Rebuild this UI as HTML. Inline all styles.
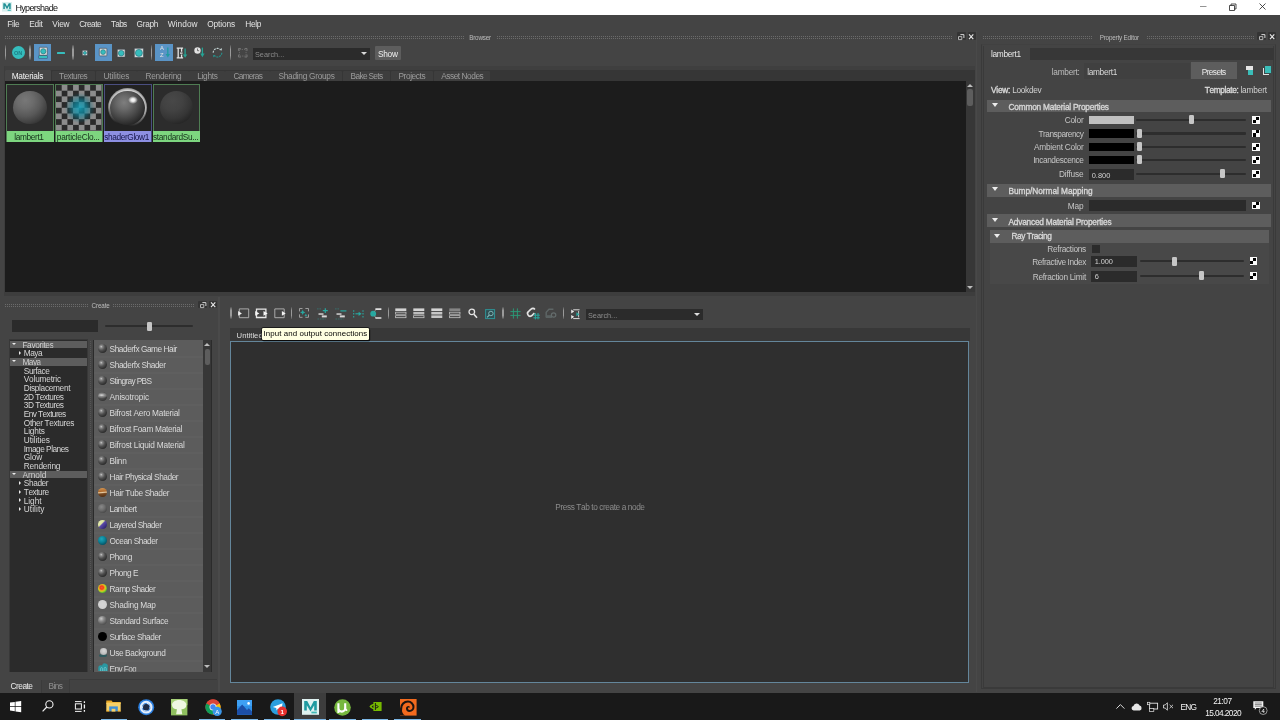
<!DOCTYPE html>
<html lang="en">
<head>
<meta charset="utf-8">
<title>Hypershade</title>
<style>
*{box-sizing:border-box;margin:0;padding:0}
html,body{width:1280px;height:720px;overflow:hidden;background:#444444;font-family:"Liberation Sans","DejaVu Sans",sans-serif;font-size:7.7px;color:#cccccc;font-kerning:none}
.a{position:absolute}
.t{position:absolute;white-space:nowrap;line-height:10px;height:10px}
.dots{position:absolute;height:3.4px}
.dots:before,.dots:after{content:"";position:absolute;left:0;width:100%;height:1.1px;background:repeating-linear-gradient(90deg,#6b6b6b 0 1px,transparent 1px 2px)}
.dots:before{top:0}
.dots:after{top:2.2px}
.sec{position:absolute;height:13px;background:#5d5d5d}
.sec b{position:absolute;top:2.5px;line-height:10px;color:#d2d2d2;font-weight:bold;white-space:nowrap;font-size:7.4px}
.tri{position:absolute;width:0;height:0;border-left:3.5px solid transparent;border-right:3.5px solid transparent;border-top:4px solid #ececec}
.trir{position:absolute;width:0;height:0;border-top:3px solid transparent;border-bottom:3px solid transparent;border-left:3.5px solid #ececec}
.lbl{position:absolute;text-align:right;white-space:nowrap;line-height:10px;height:10px;color:#c6c6c6}
.sl{position:absolute;height:2.4px;background:#2d2d2d;border-radius:1px}
.kn{position:absolute;width:5px;height:9px;background:#c6c6c6;border-radius:1.3px;margin-left:-0.4px}
.chk{position:absolute;width:7.8px;height:7.8px;background:#fafafa}
.chk:before,.chk:after{content:"";position:absolute;width:3.1px;height:3.1px;background:#000}
.chk:before{left:3.9px;top:0.8px}
.chk:after{left:0.8px;top:3.9px}
.sep{position:absolute;width:1.5px;background:linear-gradient(180deg,rgba(150,150,150,0.25) 0,#9a9a9a 30%,#9a9a9a 70%,rgba(150,150,150,0.25) 100%);border-radius:1px}
.tab{position:absolute;top:0;height:100%;border-right:1px solid #444;color:#9a9a9a;white-space:nowrap;line-height:12px}
svg{position:absolute;overflow:visible}
</style>
</head>
<body>
<div id="root" style="position:absolute;left:0;top:0;width:1280px;height:720px;will-change:transform">
<div class="a" style="left:0;top:0;width:1280px;height:15.4px;background:#fff"></div>
<svg style="left:1.600px;top:2.400px" width="10" height="9.600" viewBox="0 0 10 10" preserveAspectRatio="none"><rect width="10" height="10" fill="#d9f0ef"/><path d="M1.3 1.2h1.9l1.8 3.6 1.8-3.6h1.9v6.2H7.2V3.6L5 7.6 2.8 3.6v3.8H1.3z" fill="#1f8f95"/><rect x="5.6" y="8" width="3.2" height="1.2" fill="#3fb3b3"/></svg>
<div class="t" style="left:15.4px;top:3.4px;color:#111;font-size:9px;letter-spacing:-0.648px;">Hypershade</div>
<svg style="left:1199.3px;top:2px" width="80" height="10" viewBox="0 0 80 10"><path d="M1 4.5h6.5" stroke="#888" stroke-width="0.9" fill="none"/><path d="M30.5 3.5h5v5h-5zM32 3.5v-1.5h5v5h-1.5" stroke="#222" stroke-width="0.8" fill="none"/><path d="M60.5 1.5l6 6M66.5 1.5l-6 6" stroke="#222" stroke-width="0.8" fill="none"/></svg>
<div class="t" style="left:7.2px;top:18.9px;color:#e2e2e2;font-size:8.3px;letter-spacing:-0.281px;">File</div>
<div class="t" style="left:29.2px;top:18.9px;color:#e2e2e2;font-size:8.3px;letter-spacing:-0.201px;">Edit</div>
<div class="t" style="left:52.2px;top:18.9px;color:#e2e2e2;font-size:8.3px;letter-spacing:-0.185px;">View</div>
<div class="t" style="left:79.2px;top:18.9px;color:#e2e2e2;font-size:8.3px;letter-spacing:-0.485px;">Create</div>
<div class="t" style="left:110.95px;top:18.9px;color:#e2e2e2;font-size:8.3px;letter-spacing:-0.738px;">Tabs</div>
<div class="t" style="left:136.45px;top:18.9px;color:#e2e2e2;font-size:8.3px;letter-spacing:-0.264px;">Graph</div>
<div class="t" style="left:167.7px;top:18.9px;color:#e2e2e2;font-size:8.3px;letter-spacing:0.08px;">Window</div>
<div class="t" style="left:207.2px;top:18.9px;color:#e2e2e2;font-size:8.3px;letter-spacing:-0.086px;">Options</div>
<div class="t" style="left:245.2px;top:18.9px;color:#e2e2e2;font-size:8.3px;letter-spacing:-0.268px;">Help</div>
<div class="dots" style="left:5px;top:35.8px;width:460px"></div>
<div class="t" style="left:469.2px;top:33px;color:#bdbdbd;font-size:6.3px;letter-spacing:-0.194px;">Browser</div>
<div class="dots" style="left:497px;top:35.8px;width:455px"></div>
<div class="a" style="left:956.7px;top:32.4px;width:9px;height:7.8px;background:#343434;border-radius:1px"></div>
<div class="a" style="left:967.7px;top:32.4px;width:8px;height:7.8px;background:#343434;border-radius:1px"></div>
<svg style="left:958.4px;top:34px" width="16" height="6" viewBox="0 0 16 6"><path d="M0.5 2.6h3.300v3h-3.300z" fill="none" stroke="#c4c4c4" stroke-width="0.900"/><path d="M2.400 0.600h3.500v3.400" fill="none" stroke="#d6d6d6" stroke-width="1"/><path d="M11 0.400l4.300 4.800M15.300 0.400l-4.300 4.800" stroke="#e8e8e8" stroke-width="1.100" fill="none"/></svg>
<div class="sep" style="left:4.6px;top:45px;height:15px"></div>
<div class="a" style="left:11.700px;top:46.200px;width:13px;height:13px;border-radius:50%;background:#35bdbd"></div>
<div class="t" style="left:14px;top:47.800px;font-size:5.6px;font-weight:bold;color:#1b7f86;letter-spacing:-0.2px">ON</div>
<div class="sep" style="left:29.4px;top:45px;height:15px"></div>
<div class="a" style="left:34px;top:43.8px;width:17.3px;height:17.5px;background:#5a94c6"></div>
<svg style="left:38.8px;top:46.8px" width="8.6" height="8.6" viewBox="0 0 8.6 8.6"><rect x="0.3" y="0.3" width="8.0" height="8.0" rx="0.7" fill="#d9d9d9" stroke="#3b4650" stroke-width="0.6"/><circle cx="4.3" cy="4.3" r="2.6" fill="#36bdbd" stroke="#2a7880" stroke-width="0.7"/></svg>
<div class="a" style="left:38.8px;top:56px;width:8.6px;height:2.2px;background:#36bdbd;box-shadow:0 0 0 0.5px #2a5a70"></div>
<div class="a" style="left:56.5px;top:52px;width:8.6px;height:2.2px;background:#36bdbd;border-radius:0.6px"></div>
<div class="sep" style="left:72.3px;top:45px;height:15px"></div>
<svg style="left:82.4px;top:49.7px" width="5.8" height="5.8" viewBox="0 0 5.8 5.8"><rect x="0.3" y="0.3" width="5.2" height="5.2" rx="0.7" fill="#d9d9d9" stroke="#3b4650" stroke-width="0.6"/><circle cx="2.9" cy="2.9" r="1.5" fill="#36bdbd" stroke="#2a7880" stroke-width="0.7"/></svg>
<div class="a" style="left:94.5px;top:43.8px;width:17.3px;height:17.5px;background:#5a94c6"></div>
<svg style="left:99.3px;top:48.3px" width="8.2" height="8.2" viewBox="0 0 8.2 8.2"><rect x="0.3" y="0.3" width="7.6" height="7.6" rx="0.7" fill="#d9d9d9" stroke="#3b4650" stroke-width="0.6"/><circle cx="4.1" cy="4.1" r="2.4" fill="#36bdbd" stroke="#2a7880" stroke-width="0.7"/></svg>
<svg style="left:117.1px;top:48.5px" width="8.4" height="8.4" viewBox="0 0 8.4 8.4"><rect x="0.3" y="0.3" width="7.800000000000001" height="7.800000000000001" rx="0.7" fill="#d9d9d9" stroke="#3b4650" stroke-width="0.6"/><circle cx="4.2" cy="4.2" r="2.8" fill="#36bdbd" stroke="#2a7880" stroke-width="0.7"/></svg>
<svg style="left:134.4px;top:47.9px" width="9.8" height="9.8" viewBox="0 0 9.8 9.8"><rect x="0.3" y="0.3" width="9.200000000000001" height="9.200000000000001" rx="0.7" fill="#d9d9d9" stroke="#3b4650" stroke-width="0.6"/><circle cx="4.9" cy="4.9" r="3.5" fill="#36bdbd" stroke="#2a7880" stroke-width="0.7"/></svg>
<div class="sep" style="left:150.8px;top:45px;height:15px"></div>
<div class="a" style="left:155px;top:43.8px;width:18px;height:17.5px;background:#5a94c6"></div>
<div class="t" style="left:160.100px;top:45.400px;font-size:5.800px;line-height:6.400px;color:#e4e4e4;height:14px;white-space:normal;width:5px">A Z</div>
<svg style="left:164.600px;top:47px" width="6" height="11" viewBox="0 0 6 11"><path d="M2.800 0.400v8" stroke="#1f9aa0" stroke-width="1.300" fill="none"/><path d="M0.600 7L2.800 10.600l2.200-3.600z" fill="#1f9aa0"/></svg>
<svg style="left:176.400px;top:46.600px" width="12" height="12" viewBox="0 0 12 12"><path d="M0.700 1.100h6.400M0.700 10.900h6.400M2.200 1.200v9.600M5.600 1.200v3.600M5.600 7.400v3.400M4 6.100h2.600" stroke="#e4e4e4" stroke-width="1.300" fill="none"/><path d="M9.100 1.400v7" stroke="#25a394" stroke-width="1.300" fill="none"/><path d="M6.900 7.400L9.100 10.800l2.200-3.400z" fill="#25a394"/></svg>
<svg style="left:194.300px;top:47.400px" width="12" height="11" viewBox="0 0 12 11"><circle cx="3.500" cy="3.500" r="3.200" fill="#e2e2e2"/><path d="M3.500 1.500v2.200h1.600" stroke="#555" stroke-width="0.800" fill="none"/><path d="M8.400 0.600v7" stroke="#25a394" stroke-width="1.300" fill="none"/><path d="M6.200 6.600L8.400 10.200l2.200-3.600z" fill="#25a394"/></svg>
<svg style="left:212.400px;top:47.400px" width="11" height="11.400" viewBox="0 0 11 11"><path d="M1.200 5.500a4.300 4.300 0 0 1 7.400-3" stroke="#c2d2d2" stroke-width="1.100" fill="none" stroke-dasharray="2 0.900"/><path d="M9.800 5.500a4.300 4.300 0 0 1 -7.400 3" stroke="#26918c" stroke-width="1.100" fill="none" stroke-dasharray="2 0.900"/><path d="M7.300 2.900l2.500 0.400 0-2.600z" fill="#c2d2d2"/><path d="M3.700 8.100l-2.500-0.400 0 2.600z" fill="#26918c"/></svg>
<div class="sep" style="left:229.6px;top:45px;height:15px"></div>
<svg style="left:237.5px;top:48px" width="9.5" height="9.5" viewBox="0 0 10 10"><path d="M1.5 1.5h7v7h-7z" fill="none" stroke="#6c6c6c" stroke-width="1" stroke-dasharray="1.4 1"/><path d="M0.5 3v-2.5h2.5M7 0.5h2.5v2.5M9.5 7v2.5h-2.5M3 9.5h-2.5v-2.5" stroke="#777" stroke-width="1" fill="none"/></svg>
<div class="a" style="left:253px;top:48.2px;width:116.5px;height:11.6px;background:#2b2b2b"></div>
<div class="t" style="left:255px;top:50.2px;color:#8a8a8a;font-size:7.3px">Search...</div>
<div class="tri" style="left:360.800px;top:52.3px;border-top-color:#d8d8d8;border-left-width:3.2px;border-right-width:3.2px;border-top-width:3.6px"></div>
<div class="a" style="left:374.800px;top:46.400px;width:26px;height:13.600px;background:#5d5d5d;border-radius:1px"></div>
<div class="t" style="left:377.9px;top:49px;color:#f0f0f0;font-size:8.3px;letter-spacing:-0.241px;">Show</div>
<div class="a" style="left:5px;top:69.5px;width:970px;height:12px;background:#363636"></div>
<div class="a" style="left:5px;top:69.7px;width:46px;height:11.8px;background:#464646;border-radius:1px 1px 0 0"></div>
<div class="t" style="left:11.7px;top:71px;color:#f2f2f2;font-size:8.3px;letter-spacing:-0.241px;">Materials</div>
<div class="a" style="left:51.6px;top:71px;width:43.7px;height:10.2px;background:#3e3e3e;border-radius:1px 1px 0 0"></div>
<div class="t" style="left:58.95px;top:71px;color:#9c9c9c;font-size:8.3px;letter-spacing:-0.505px;">Textures</div>
<div class="a" style="left:95.9px;top:71px;width:40.9px;height:10.2px;background:#3e3e3e;border-radius:1px 1px 0 0"></div>
<div class="t" style="left:103.45px;top:71px;color:#9c9c9c;font-size:8.3px;letter-spacing:-0.083px;">Utilities</div>
<div class="a" style="left:137.4px;top:71px;width:51.4px;height:10.2px;background:#3e3e3e;border-radius:1px 1px 0 0"></div>
<div class="t" style="left:145.45px;top:71px;color:#9c9c9c;font-size:8.3px;letter-spacing:-0.255px;">Rendering</div>
<div class="a" style="left:189.4px;top:71px;width:35.4px;height:10.2px;background:#3e3e3e;border-radius:1px 1px 0 0"></div>
<div class="t" style="left:197.2px;top:71px;color:#9c9c9c;font-size:8.3px;letter-spacing:-0.275px;">Lights</div>
<div class="a" style="left:225.4px;top:71px;width:44.4px;height:10.2px;background:#3e3e3e;border-radius:1px 1px 0 0"></div>
<div class="t" style="left:233.45px;top:71px;color:#9c9c9c;font-size:8.3px;letter-spacing:-0.703px;">Cameras</div>
<div class="a" style="left:270.4px;top:71px;width:71.8px;height:10.2px;background:#3e3e3e;border-radius:1px 1px 0 0"></div>
<div class="t" style="left:278.45px;top:71px;color:#9c9c9c;font-size:8.3px;letter-spacing:-0.274px;">Shading Groups</div>
<div class="a" style="left:342.8px;top:71px;width:47.6px;height:10.2px;background:#3e3e3e;border-radius:1px 1px 0 0"></div>
<div class="t" style="left:350.6px;top:71px;color:#9c9c9c;font-size:8.3px;letter-spacing:-0.665px;">Bake Sets</div>
<div class="a" style="left:391px;top:71px;width:42.1px;height:10.2px;background:#3e3e3e;border-radius:1px 1px 0 0"></div>
<div class="t" style="left:398.45px;top:71px;color:#9c9c9c;font-size:8.3px;letter-spacing:-0.404px;">Projects</div>
<div class="a" style="left:433.7px;top:71px;width:56.3px;height:10.2px;background:#3e3e3e;border-radius:1px 1px 0 0"></div>
<div class="t" style="left:441.2px;top:71px;color:#9c9c9c;font-size:8.3px;letter-spacing:-0.451px;">Asset Nodes</div>
<div class="a" style="left:4.2px;top:66px;width:971px;height:3.6px;background:#3f3f3f"></div>
<div class="a" style="left:4.2px;top:66px;width:1.1px;height:228px;background:#3d3d3d"></div>
<div class="a" style="left:5.3px;top:81.3px;width:961px;height:210.7px;background:#1c1c1c"></div>
<div class="a" style="left:966.3px;top:81.3px;width:8.4px;height:210.7px;background:#373737"></div>
<div class="a" style="left:966.900px;top:88.800px;width:6.300px;height:17px;background:#5d5d5d;border-radius:2px"></div>
<div class="tri" style="left:967.2px;top:84px;transform:rotate(180deg);border-left-width:3px;border-right-width:3px;border-top-width:3.5px;border-top-color:#bdbdbd"></div>
<div class="tri" style="left:967.2px;top:286px;border-left-width:3px;border-right-width:3px;border-top-width:3.5px;border-top-color:#bdbdbd"></div>
<div class="a" style="left:6.3px;top:84.1px;width:47.8px;height:58px;background:#4f7c53"></div>
<div class="a" style="left:7.4px;top:85.3px;width:45.599999999999994px;height:45.4px;background:#2c2c2c"></div>
<div class="a" style="left:13.100000000000001px;top:90.5px;width:33.6px;height:33.6px;border-radius:50%;background:radial-gradient(circle at 36% 28%,#787878 0,#6c6c6c 25%,#585858 50%,#3e3e3e 72%,#232323 90%,#161616 100%)"></div>
<div class="a" style="left:6.8px;top:130.7px;width:46.8px;height:11px;background:#7dd67f"></div>
<div class="t" style="left:14.2px;top:132px;color:#15301a;font-size:8.3px;letter-spacing:-0.362px;">lambert1</div>
<div class="a" style="left:55.2px;top:84.1px;width:47.8px;height:58px;background:#4f7c53"></div>
<div class="a" style="left:56.300000000000004px;top:85.3px;width:45.599999999999994px;height:45.4px;background:#2a2a2a;background-image:conic-gradient(#8c8c8c 25%,#2a2a2a 0 50%,#8c8c8c 0 75%,#2a2a2a 0);background-size:11.4px 11.4px;background-position:0 0"></div>
<div class="a" style="left:56.300000000000004px;top:85.3px;width:45.599999999999994px;height:45.4px;background:radial-gradient(circle at 52% 50%,rgba(20,165,190,0.85) 0,rgba(10,140,165,0.65) 20%,rgba(0,105,125,0.3) 34%,rgba(0,90,110,0) 46%)"></div>
<div class="a" style="left:55.7px;top:130.7px;width:46.8px;height:11px;background:#7dd67f"></div>
<div class="t" style="left:56.8px;top:132px;color:#15301a;font-size:8.3px;letter-spacing:-0.238px;">particleClo...</div>
<div class="a" style="left:103.9px;top:84.1px;width:47.8px;height:58px;background:#4a4e80"></div>
<div class="a" style="left:105.0px;top:85.3px;width:45.599999999999994px;height:45.4px;background:#222"></div>
<div class="a" style="left:105.0px;top:85.3px;width:45.599999999999994px;height:45.4px;overflow:hidden"><div class="a" style="left:3.4px;top:2.9px;width:39.0px;height:39.0px;border-radius:50%;background:rgba(255,255,255,0.95);filter:blur(2px);-webkit-mask-image:linear-gradient(12deg,transparent 12%,#000 50%);mask-image:linear-gradient(12deg,transparent 12%,#000 50%)"></div></div>
<div class="a" style="left:110.3px;top:90.8px;width:34.6px;height:34.6px;border-radius:50%;background:radial-gradient(circle at 40% 34%,#7e7e7e 0,#6a6a6a 22%,#4a4a4a 48%,#2a2a2a 72%,#101010 100%)"></div>
<div class="a" style="left:128.4px;top:96.3px;width:10px;height:8px;border-radius:50%;background:radial-gradient(ellipse at 50% 50%,#fff 0,rgba(255,255,255,0.85) 28%,rgba(255,255,255,0) 70%)"></div>
<div class="a" style="left:104.4px;top:130.7px;width:46.8px;height:11px;background:#8d8fe2"></div>
<div class="t" style="left:104.2px;top:132px;color:#15154a;font-size:8.3px;letter-spacing:-0.373px;">shaderGlow1</div>
<div class="a" style="left:152.7px;top:84.1px;width:47.8px;height:58px;background:#4f7c53"></div>
<div class="a" style="left:153.79999999999998px;top:85.3px;width:45.599999999999994px;height:45.4px;background:#2c2c2c"></div>
<div class="a" style="left:159.49999999999997px;top:90.5px;width:33.6px;height:33.6px;border-radius:50%;background:radial-gradient(circle at 38% 30%,#484848 0,#424242 32%,#363636 58%,#212121 84%,#141414 100%)"></div>
<div class="a" style="left:153.2px;top:130.7px;width:46.8px;height:11px;background:#7dd67f"></div>
<div class="t" style="left:153.0px;top:132px;color:#15301a;font-size:8.3px;letter-spacing:-0.321px;">standardSu...</div>
<div class="a" style="left:976.3px;top:31px;width:1.100px;height:661px;background:#494949"></div>
<div class="a" style="left:218.3px;top:297px;width:1.3px;height:395px;background:#4a4a4a"></div>
<div class="a" style="left:4.2px;top:292px;width:971px;height:3.8px;background:#3d3d3d"></div>
<div class="dots" style="left:983px;top:35.8px;width:109px"></div>
<div class="t" style="left:1099.7px;top:33px;color:#bdbdbd;font-size:6.3px;letter-spacing:-0.184px;">Property Editor</div>
<div class="dots" style="left:1147px;top:35.8px;width:108px"></div>
<div class="a" style="left:1257.1px;top:32.4px;width:9px;height:7.8px;background:#343434;border-radius:1px"></div>
<div class="a" style="left:1268.1px;top:32.4px;width:8px;height:7.8px;background:#343434;border-radius:1px"></div>
<svg style="left:1258.8px;top:34px" width="16" height="6" viewBox="0 0 16 6"><path d="M0.5 2.6h3.300v3h-3.300z" fill="none" stroke="#c4c4c4" stroke-width="0.900"/><path d="M2.400 0.600h3.500v3.400" fill="none" stroke="#d6d6d6" stroke-width="1"/><path d="M11 0.400l4.300 4.800M15.300 0.400l-4.300 4.800" stroke="#e8e8e8" stroke-width="1.100" fill="none"/></svg>
<div class="a" style="left:981px;top:44px;width:295.2px;height:645.3px;border:1.100px solid #3a3a3a;border-top-color:#414141"></div>
<div class="a" style="left:983.2px;top:45.5px;width:291.3px;height:642.5px;border:1.100px solid #3a3a3a;border-top:none"></div>
<div class="a" style="left:984.5px;top:47.5px;width:289.5px;height:12.6px;background:#373737"></div>
<div class="a" style="left:984.5px;top:47.5px;width:45px;height:12.6px;background:#444"></div>
<div class="t" style="left:990.95px;top:48.6px;color:#e8e8e8;font-size:8.3px;letter-spacing:-0.287px;">lambert1</div>
<div class="t" style="left:1051.7px;top:66.7px;color:#bdbdbd;font-size:8.3px;letter-spacing:-0.248px;">lambert:</div>
<div class="a" style="left:1084.3px;top:62.5px;width:106px;height:16.7px;background:#404040"></div>
<div class="t" style="left:1087.2px;top:66.7px;color:#d8d8d8;font-size:8.3px;letter-spacing:-0.318px;">lambert1</div>
<div class="a" style="left:1190.8px;top:62.3px;width:46.6px;height:17px;background:#5d5d5d"></div>
<div class="t" style="left:1201.7px;top:66.7px;color:#ececec;font-size:8.3px;letter-spacing:-0.591px;">Presets</div>
<div class="a" style="left:1247.9px;top:69.6px;width:5.2px;height:5.4px;background:#3bbdb8"></div>
<div class="a" style="left:1245.8px;top:66.4px;width:7.1px;height:3.4px;background:#e6e6e6"></div>
<div class="a" style="left:1262.8px;top:68.3px;width:5.8px;height:6.7px;background:#e2e2e2"></div>
<div class="a" style="left:1264px;top:66px;width:7.6px;height:7.6px;background:#3a4a4c"></div>
<div class="a" style="left:1264.7px;top:66.4px;width:6.5px;height:6.7px;background:#3bbdb8"></div>
<div class="t" style="left:991.05px;top:84.6px;color:#d8d8d8;font-size:8.3px;letter-spacing:-0.249px;-webkit-text-stroke:0.35px #d8d8d8;">View:</div>
<div class="t" style="left:1012.2px;top:84.6px;color:#d0d0d0;font-size:8.3px;letter-spacing:-0.304px;">Lookdev</div>
<div class="t" style="left:1204.8px;top:84.6px;color:#d8d8d8;font-size:8.3px;letter-spacing:-0.373px;-webkit-text-stroke:0.35px #d8d8d8;">Template:</div>
<div class="t" style="left:1240.45px;top:84.6px;color:#d0d0d0;font-size:8.3px;letter-spacing:-0.168px;">lambert</div>
<div class="a" style="left:987px;top:99.6px;width:284.3px;height:12.8px;background:#5d5d5d"></div>
<div class="tri" style="left:991.6px;top:103.19999999999999px"></div>
<div class="t" style="left:1008.55px;top:102.1px;color:#d6d6d6;font-size:8.3px;letter-spacing:-0.205px;-webkit-text-stroke:0.35px #d6d6d6;">Common Material Properties</div>
<div class="t" style="left:1064.7px;top:115.4px;color:#c6c6c6;font-size:8.3px;letter-spacing:-0.217px;">Color</div>
<div class="a" style="left:1088.7px;top:116.0px;width:45.5px;height:8.4px;background:#c0c0c0"></div>
<div class="sl" style="left:1136px;top:119.0px;width:109.5px"></div>
<div class="kn" style="left:1189.5px;top:115.4px"></div>
<div class="chk" style="left:1252.3px;top:116.3px"></div>
<div class="t" style="left:1038.45px;top:128.7px;color:#c6c6c6;font-size:8.3px;letter-spacing:-0.479px;">Transparency</div>
<div class="a" style="left:1088.7px;top:129.3px;width:45.5px;height:8.4px;background:#000"></div>
<div class="sl" style="left:1136px;top:132.3px;width:109.5px"></div>
<div class="kn" style="left:1137.3px;top:128.7px"></div>
<div class="chk" style="left:1252.3px;top:129.6px"></div>
<div class="t" style="left:1033.95px;top:142.1px;color:#c6c6c6;font-size:8.3px;letter-spacing:-0.238px;">Ambient Color</div>
<div class="a" style="left:1088.7px;top:142.7px;width:45.5px;height:8.4px;background:#000"></div>
<div class="sl" style="left:1136px;top:145.7px;width:109.5px"></div>
<div class="kn" style="left:1137.3px;top:142.1px"></div>
<div class="chk" style="left:1252.3px;top:143.0px"></div>
<div class="t" style="left:1033.2px;top:155.4px;color:#c6c6c6;font-size:8.3px;letter-spacing:-0.43px;">Incandescence</div>
<div class="a" style="left:1088.7px;top:156.0px;width:45.5px;height:8.4px;background:#000"></div>
<div class="sl" style="left:1136px;top:159.0px;width:109.5px"></div>
<div class="kn" style="left:1137.3px;top:155.4px"></div>
<div class="chk" style="left:1252.3px;top:156.3px"></div>
<div class="t" style="left:1058.95px;top:169.1px;color:#c6c6c6;font-size:8.3px;letter-spacing:-0.19px;">Diffuse</div>
<div class="a" style="left:1088.7px;top:169.3px;width:45.5px;height:10.8px;background:#2b2b2b"></div>
<div class="t" style="left:1091.7px;top:170.8px;color:#d0d0d0;font-size:7.4px;letter-spacing:0.046px;">0.800</div>
<div class="sl" style="left:1136px;top:172.70000000000002px;width:109.5px"></div>
<div class="kn" style="left:1220.5px;top:169.1px"></div>
<div class="chk" style="left:1252.3px;top:170.0px"></div>
<div class="a" style="left:987px;top:183.8px;width:284.3px;height:12.8px;background:#5d5d5d"></div>
<div class="tri" style="left:991.6px;top:187.4px"></div>
<div class="t" style="left:1008.55px;top:186.3px;color:#d6d6d6;font-size:8.3px;letter-spacing:-0.044px;-webkit-text-stroke:0.35px #d6d6d6;">Bump/Normal Mapping</div>
<div class="t" style="left:1067.7px;top:200.6px;color:#c6c6c6;font-size:8.3px;letter-spacing:-0.132px;">Map</div>
<div class="a" style="left:1088.7px;top:200px;width:157.2px;height:10.8px;background:#2b2b2b"></div>
<div class="chk" style="left:1252.3px;top:201.5px"></div>
<div class="a" style="left:987px;top:214.4px;width:284.3px;height:12.8px;background:#5d5d5d"></div>
<div class="tri" style="left:991.6px;top:218.0px"></div>
<div class="t" style="left:1008.55px;top:216.9px;color:#d6d6d6;font-size:8.3px;letter-spacing:-0.217px;-webkit-text-stroke:0.35px #d6d6d6;">Advanced Material Properties</div>
<div class="a" style="left:989.5px;top:242.5px;width:279.3px;height:41px;background:#484848"></div>
<div class="a" style="left:989.5px;top:230px;width:279.3px;height:12.6px;background:#5d5d5d"></div>
<div class="tri" style="left:994.1px;top:233.6px"></div>
<div class="t" style="left:1011.55px;top:231.2px;color:#d6d6d6;font-size:8.3px;letter-spacing:-0.449px;-webkit-text-stroke:0.35px #d6d6d6;">Ray Tracing</div>
<div class="t" style="left:1047.2px;top:244.4px;color:#c6c6c6;font-size:8.3px;letter-spacing:-0.293px;">Refractions</div>
<div class="a" style="left:1091.6px;top:245px;width:8.3px;height:8.2px;background:#2b2b2b"></div>
<div class="t" style="left:1032.2px;top:257.0px;color:#c6c6c6;font-size:8.3px;letter-spacing:-0.389px;">Refractive Index</div>
<div class="a" style="left:1091.3px;top:255.9px;width:45.5px;height:11px;background:#2b2b2b"></div>
<div class="t" style="left:1094.7px;top:257.4px;color:#d0d0d0;font-size:7.4px;letter-spacing:-0.104px;">1.000</div>
<div class="sl" style="left:1139.5px;top:260.0px;width:104.3px"></div>
<div class="kn" style="left:1172.8px;top:256.6px"></div>
<div class="chk" style="left:1249.5px;top:257.4px"></div>
<div class="t" style="left:1032.7px;top:271.6px;color:#c6c6c6;font-size:8.3px;letter-spacing:-0.276px;">Refraction Limit</div>
<div class="a" style="left:1091.3px;top:270.5px;width:45.5px;height:11px;background:#2b2b2b"></div>
<div class="t" style="left:1094.7px;top:272.0px;color:#d0d0d0;font-size:7.4px;letter-spacing:-0.366px;">6</div>
<div class="sl" style="left:1139.5px;top:274.6px;width:104.3px"></div>
<div class="kn" style="left:1199.2px;top:271.2px"></div>
<div class="chk" style="left:1249.5px;top:272.0px"></div>
<div class="dots" style="left:5px;top:304.2px;width:83px"></div>
<div class="t" style="left:91.6px;top:301.3px;color:#bdbdbd;font-size:6.3px;letter-spacing:-0.152px;">Create</div>
<div class="dots" style="left:113px;top:304.2px;width:82px"></div>
<div class="a" style="left:198.1px;top:300.6px;width:9px;height:7.8px;background:#343434;border-radius:1px"></div>
<div class="a" style="left:209.1px;top:300.6px;width:8px;height:7.8px;background:#343434;border-radius:1px"></div>
<svg style="left:199.8px;top:302.2px" width="16" height="6" viewBox="0 0 16 6"><path d="M0.5 2.6h3.300v3h-3.300z" fill="none" stroke="#c4c4c4" stroke-width="0.900"/><path d="M2.400 0.600h3.500v3.400" fill="none" stroke="#d6d6d6" stroke-width="1"/><path d="M11 0.400l4.300 4.800M15.300 0.400l-4.300 4.800" stroke="#e8e8e8" stroke-width="1.100" fill="none"/></svg>
<div class="a" style="left:12.2px;top:320.3px;width:86.2px;height:11.3px;background:#2b2b2b"></div>
<div class="sl" style="left:105px;top:325px;width:87.5px"></div>
<div class="kn" style="left:147.2px;top:322px;height:8.6px"></div>
<div class="a" style="left:8.7px;top:339px;width:79.6px;height:333.4px;background:#383838"></div>
<div class="a" style="left:9.7px;top:340px;width:77.7px;height:331.5px;background:#2b2b2b"></div>
<div class="a" style="left:10.3px;top:340.90px;width:76.6px;height:7.4px;background:#5d5d5d"></div>
<div class="tri" style="left:11.6px;top:343.00px;border-left-width:2.1px;border-right-width:2.1px;border-top-width:2.5px"></div>
<div class="t" style="left:22.4px;top:339.7px;color:#d0d0d0;font-size:8.3px;letter-spacing:-0.342px;clip-path:inset(0 0 1.6px 0);">Favorites</div>
<div class="trir" style="left:18.7px;top:351.17px;border-top-width:2px;border-bottom-width:2px;border-left-width:2.5px"></div>
<div class="t" style="left:23.8px;top:348.37px;color:#d6d6d6;font-size:8.3px;letter-spacing:-0.474px;">Maya</div>
<div class="a" style="left:10.3px;top:358.23px;width:76.6px;height:7.4px;background:#5d5d5d"></div>
<div class="tri" style="left:11.6px;top:360.33px;border-left-width:2.1px;border-right-width:2.1px;border-top-width:2.5px"></div>
<div class="t" style="left:22.4px;top:357.03px;color:#d0d0d0;font-size:8.3px;letter-spacing:-0.499px;clip-path:inset(0 0 1.6px 0);">Maya</div>
<div class="t" style="left:23.8px;top:365.7px;color:#d6d6d6;font-size:8.3px;letter-spacing:-0.422px;">Surface</div>
<div class="t" style="left:23.8px;top:374.36px;color:#d6d6d6;font-size:8.3px;letter-spacing:-0.206px;">Volumetric</div>
<div class="t" style="left:23.8px;top:383.03px;color:#d6d6d6;font-size:8.3px;letter-spacing:-0.324px;">Displacement</div>
<div class="t" style="left:23.8px;top:391.69px;color:#d6d6d6;font-size:8.3px;letter-spacing:-0.505px;">2D Textures</div>
<div class="t" style="left:23.8px;top:400.36px;color:#d6d6d6;font-size:8.3px;letter-spacing:-0.505px;">3D Textures</div>
<div class="t" style="left:23.8px;top:409.02px;color:#d6d6d6;font-size:8.3px;letter-spacing:-0.583px;">Env Textures</div>
<div class="t" style="left:23.8px;top:417.69px;color:#d6d6d6;font-size:8.3px;letter-spacing:-0.372px;">Other Textures</div>
<div class="t" style="left:23.8px;top:426.35px;color:#d6d6d6;font-size:8.3px;letter-spacing:-0.208px;">Lights</div>
<div class="t" style="left:23.8px;top:435.02px;color:#d6d6d6;font-size:8.3px;letter-spacing:-0.066px;">Utilities</div>
<div class="t" style="left:23.8px;top:443.68px;color:#d6d6d6;font-size:8.3px;letter-spacing:-0.509px;">Image Planes</div>
<div class="t" style="left:23.8px;top:452.35px;color:#d6d6d6;font-size:8.3px;letter-spacing:-0.128px;">Glow</div>
<div class="t" style="left:23.8px;top:461.01px;color:#d6d6d6;font-size:8.3px;letter-spacing:-0.211px;">Rendering</div>
<div class="a" style="left:10.3px;top:470.88px;width:76.6px;height:7.4px;background:#5d5d5d"></div>
<div class="tri" style="left:11.6px;top:472.98px;border-left-width:2.1px;border-right-width:2.1px;border-top-width:2.5px"></div>
<div class="t" style="left:22.4px;top:469.68px;color:#d0d0d0;font-size:8.3px;letter-spacing:0.01px;clip-path:inset(0 0 1.6px 0);">Arnold</div>
<div class="trir" style="left:18.7px;top:481.14px;border-top-width:2px;border-bottom-width:2px;border-left-width:2.5px"></div>
<div class="t" style="left:23.8px;top:478.34px;color:#d6d6d6;font-size:8.3px;letter-spacing:-0.394px;">Shader</div>
<div class="trir" style="left:18.7px;top:489.80px;border-top-width:2px;border-bottom-width:2px;border-left-width:2.5px"></div>
<div class="t" style="left:23.8px;top:487.0px;color:#d6d6d6;font-size:8.3px;letter-spacing:-0.463px;">Texture</div>
<div class="trir" style="left:18.7px;top:498.47px;border-top-width:2px;border-bottom-width:2px;border-left-width:2.5px"></div>
<div class="t" style="left:23.8px;top:495.67px;color:#d6d6d6;font-size:8.3px;letter-spacing:-0.07px;">Light</div>
<div class="trir" style="left:18.7px;top:507.13px;border-top-width:2px;border-bottom-width:2px;border-left-width:2.5px"></div>
<div class="t" style="left:23.8px;top:504.34px;color:#d6d6d6;font-size:8.3px;letter-spacing:0.052px;">Utility</div>
<div class="a" style="left:89.6px;top:341px;width:1.2px;height:330px;background:repeating-linear-gradient(180deg,#555 0 1px,transparent 1px 2px)"></div>
<div class="a" style="left:93.2px;top:339.7px;width:118.8px;height:332.4px;background:#2b2b2b"></div>
<div class="a" style="left:93.9px;top:340.3px;width:109.3px;height:331.3px;background:#5c5c5c;overflow:hidden"></div>
<div class="a" style="left:203.2px;top:340.3px;width:8.2px;height:331.3px;background:#373737"></div>
<div class="a" style="left:204.6px;top:349px;width:5.2px;height:16px;background:#5d5d5d;border-radius:2px"></div>
<div class="tri" style="left:203.9px;top:343px;transform:rotate(180deg);border-left-width:3px;border-right-width:3px;border-top-width:3.5px;border-top-color:#bdbdbd"></div>
<div class="tri" style="left:203.9px;top:664.5px;border-left-width:3px;border-right-width:3px;border-top-width:3.5px;border-top-color:#bdbdbd"></div>
<div class="a" style="left:98px;top:343.80px;width:9px;height:9px;border-radius:50%;background:radial-gradient(circle at 36% 30%,#d2d2d2 0,#8c8c8c 13%,#505050 42%,#2c2c2c 74%,#161616 100%)"></div>
<div class="t" style="left:109.6px;top:343.7px;color:#dadada;font-size:8.3px;letter-spacing:-0.461px;">Shaderfx Game Hair</div>
<div class="a" style="left:93.9px;top:356.40px;width:109.3px;height:1.2px;background:#5f5f5f"></div>
<div class="a" style="left:98px;top:359.80px;width:9px;height:9px;border-radius:50%;background:radial-gradient(circle at 36% 30%,#d2d2d2 0,#8c8c8c 13%,#505050 42%,#2c2c2c 74%,#161616 100%)"></div>
<div class="t" style="left:109.6px;top:359.7px;color:#dadada;font-size:8.3px;letter-spacing:-0.413px;">Shaderfx Shader</div>
<div class="a" style="left:93.9px;top:372.40px;width:109.3px;height:1.2px;background:#5f5f5f"></div>
<div class="a" style="left:98px;top:375.80px;width:9px;height:9px;border-radius:50%;background:radial-gradient(circle at 36% 30%,#d2d2d2 0,#8c8c8c 13%,#505050 42%,#2c2c2c 74%,#161616 100%)"></div>
<div class="t" style="left:109.6px;top:375.7px;color:#dadada;font-size:8.3px;letter-spacing:-0.626px;">Stingray PBS</div>
<div class="a" style="left:93.9px;top:388.40px;width:109.3px;height:1.2px;background:#5f5f5f"></div>
<div class="a" style="left:98px;top:391.80px;width:9px;height:9px;border-radius:50%;background:radial-gradient(ellipse 80% 35% at 40% 35%,#e0e0e0 0,#8a8a8a 45%,rgba(70,70,70,0) 100%),radial-gradient(circle at 40% 35%,#707070 0,#454545 55%,#1e1e1e 100%)"></div>
<div class="t" style="left:109.6px;top:391.7px;color:#dadada;font-size:8.3px;letter-spacing:-0.155px;">Anisotropic</div>
<div class="a" style="left:93.9px;top:404.40px;width:109.3px;height:1.2px;background:#5f5f5f"></div>
<div class="a" style="left:98px;top:407.80px;width:9px;height:9px;border-radius:50%;background:radial-gradient(circle at 36% 30%,#d2d2d2 0,#8c8c8c 13%,#505050 42%,#2c2c2c 74%,#161616 100%)"></div>
<div class="t" style="left:109.6px;top:407.7px;color:#dadada;font-size:8.3px;letter-spacing:-0.242px;">Bifrost Aero Material</div>
<div class="a" style="left:93.9px;top:420.40px;width:109.3px;height:1.2px;background:#5f5f5f"></div>
<div class="a" style="left:98px;top:423.80px;width:9px;height:9px;border-radius:50%;background:radial-gradient(circle at 36% 30%,#d2d2d2 0,#8c8c8c 13%,#505050 42%,#2c2c2c 74%,#161616 100%)"></div>
<div class="t" style="left:109.6px;top:423.7px;color:#dadada;font-size:8.3px;letter-spacing:-0.299px;">Bifrost Foam Material</div>
<div class="a" style="left:93.9px;top:436.40px;width:109.3px;height:1.2px;background:#5f5f5f"></div>
<div class="a" style="left:98px;top:439.80px;width:9px;height:9px;border-radius:50%;background:radial-gradient(circle at 36% 30%,#d2d2d2 0,#8c8c8c 13%,#505050 42%,#2c2c2c 74%,#161616 100%)"></div>
<div class="t" style="left:109.6px;top:439.7px;color:#dadada;font-size:8.3px;letter-spacing:-0.205px;">Bifrost Liquid Material</div>
<div class="a" style="left:93.9px;top:452.40px;width:109.3px;height:1.2px;background:#5f5f5f"></div>
<div class="a" style="left:98px;top:455.80px;width:9px;height:9px;border-radius:50%;background:radial-gradient(circle at 36% 30%,#d2d2d2 0,#8c8c8c 13%,#505050 42%,#2c2c2c 74%,#161616 100%)"></div>
<div class="t" style="left:109.6px;top:455.7px;color:#dadada;font-size:8.3px;letter-spacing:-0.321px;">Blinn</div>
<div class="a" style="left:93.9px;top:468.40px;width:109.3px;height:1.2px;background:#5f5f5f"></div>
<div class="a" style="left:98px;top:471.80px;width:9px;height:9px;border-radius:50%;background:radial-gradient(circle at 36% 30%,#d2d2d2 0,#8c8c8c 13%,#505050 42%,#2c2c2c 74%,#161616 100%)"></div>
<div class="t" style="left:109.6px;top:471.7px;color:#dadada;font-size:8.3px;letter-spacing:-0.445px;">Hair Physical Shader</div>
<div class="a" style="left:93.9px;top:484.40px;width:109.3px;height:1.2px;background:#5f5f5f"></div>
<div class="a" style="left:98px;top:487.80px;width:9px;height:9px;border-radius:50%;background:linear-gradient(175deg,#d89a55 0,#b06a2c 38%,#e4c9a0 50%,#7a4a22 62%,#4a2c14 100%)"></div>
<div class="t" style="left:109.6px;top:487.7px;color:#dadada;font-size:8.3px;letter-spacing:-0.37px;">Hair Tube Shader</div>
<div class="a" style="left:93.9px;top:500.40px;width:109.3px;height:1.2px;background:#5f5f5f"></div>
<div class="a" style="left:98px;top:503.80px;width:9px;height:9px;border-radius:50%;background:radial-gradient(circle at 38% 32%,#8a8a8a 0,#6e6e6e 40%,#454545 80%,#262626 100%)"></div>
<div class="t" style="left:109.6px;top:503.7px;color:#dadada;font-size:8.3px;letter-spacing:-0.478px;">Lambert</div>
<div class="a" style="left:93.9px;top:516.40px;width:109.3px;height:1.2px;background:#5f5f5f"></div>
<div class="a" style="left:98px;top:519.80px;width:9px;height:9px;border-radius:50%;background:linear-gradient(135deg,#e9efb8 0,#dfe6a0 38%,#5a4aa8 48%,#3a2f80 75%,#1d1848 100%)"></div>
<div class="t" style="left:109.6px;top:519.7px;color:#dadada;font-size:8.3px;letter-spacing:-0.515px;">Layered Shader</div>
<div class="a" style="left:93.9px;top:532.40px;width:109.3px;height:1.2px;background:#5f5f5f"></div>
<div class="a" style="left:98px;top:535.80px;width:9px;height:9px;border-radius:50%;background:radial-gradient(circle at 40% 32%,#1fa6ba 0,#0c8398 40%,#054e60 80%,#032e3a 100%)"></div>
<div class="t" style="left:109.6px;top:535.7px;color:#dadada;font-size:8.3px;letter-spacing:-0.452px;">Ocean Shader</div>
<div class="a" style="left:93.9px;top:548.40px;width:109.3px;height:1.2px;background:#5f5f5f"></div>
<div class="a" style="left:98px;top:551.80px;width:9px;height:9px;border-radius:50%;background:radial-gradient(circle at 36% 30%,#d2d2d2 0,#8c8c8c 13%,#505050 42%,#2c2c2c 74%,#161616 100%)"></div>
<div class="t" style="left:109.6px;top:551.7px;color:#dadada;font-size:8.3px;letter-spacing:-0.33px;">Phong</div>
<div class="a" style="left:93.9px;top:564.40px;width:109.3px;height:1.2px;background:#5f5f5f"></div>
<div class="a" style="left:98px;top:567.80px;width:9px;height:9px;border-radius:50%;background:radial-gradient(circle at 36% 30%,#d2d2d2 0,#8c8c8c 13%,#505050 42%,#2c2c2c 74%,#161616 100%)"></div>
<div class="t" style="left:109.6px;top:567.7px;color:#dadada;font-size:8.3px;letter-spacing:-0.463px;">Phong E</div>
<div class="a" style="left:93.9px;top:580.40px;width:109.3px;height:1.2px;background:#5f5f5f"></div>
<div class="a" style="left:98px;top:583.80px;width:9px;height:9px;border-radius:50%;background:radial-gradient(circle at 42% 40%,#ff5a2a 0,#f0401e 22%,#f0a020 38%,#c8d020 50%,#58b830 70%,#2a8a2a 100%)"></div>
<div class="t" style="left:109.6px;top:583.7px;color:#dadada;font-size:8.3px;letter-spacing:-0.51px;">Ramp Shader</div>
<div class="a" style="left:93.9px;top:596.40px;width:109.3px;height:1.2px;background:#5f5f5f"></div>
<div class="a" style="left:98px;top:599.80px;width:9px;height:9px;border-radius:50%;background:radial-gradient(circle at 50% 50%,#d6d6d6 0,#cfcfcf 80%,#b8b8b8 100%)"></div>
<div class="t" style="left:109.6px;top:599.7px;color:#dadada;font-size:8.3px;letter-spacing:-0.256px;">Shading Map</div>
<div class="a" style="left:93.9px;top:612.40px;width:109.3px;height:1.2px;background:#5f5f5f"></div>
<div class="a" style="left:98px;top:615.80px;width:9px;height:9px;border-radius:50%;background:radial-gradient(circle at 36% 30%,#c8c8c8 0,#8c8c8c 30%,#5a5a5a 65%,#3a3a3a 100%)"></div>
<div class="t" style="left:109.6px;top:615.7px;color:#dadada;font-size:8.3px;letter-spacing:-0.375px;">Standard Surface</div>
<div class="a" style="left:93.9px;top:628.40px;width:109.3px;height:1.2px;background:#5f5f5f"></div>
<div class="a" style="left:98px;top:631.80px;width:9px;height:9px;border-radius:50%;background:#000"></div>
<div class="t" style="left:109.6px;top:631.7px;color:#dadada;font-size:8.3px;letter-spacing:-0.452px;">Surface Shader</div>
<div class="a" style="left:93.9px;top:644.40px;width:109.3px;height:1.2px;background:#5f5f5f"></div>
<div class="a" style="left:99px;top:654.10px;width:7.500px;height:3.400px;border-radius:50%;background:#2f5a5e"></div>
<div class="a" style="left:99.800px;top:647.80px;width:7.300px;height:6.800px;border-radius:50%;background:radial-gradient(circle at 55% 40%,#d8d8d8 0,#c0c0c0 55%,#8a8a8a 100%)"></div>
<div class="t" style="left:109.6px;top:647.7px;color:#dadada;font-size:8.3px;letter-spacing:-0.383px;">Use Background</div>
<div class="a" style="left:93.9px;top:660.40px;width:109.3px;height:1.2px;background:#5f5f5f"></div>
<svg style="left:97.900px;top:664.30px" width="10" height="7" viewBox="0 0 10 7"><path d="M0.300 7V3.400A2.400 2.400 0 0 1 4 1.600 2.800 2.800 0 0 1 9.700 3.200V7z" fill="#2a98a2"/><path d="M2.600 7V4.600a1 1 0 0 1 2 0V7M6.200 7V4.400a1 1 0 0 1 2 0V7" fill="none" stroke="#7fd0d6" stroke-width="0.700"/></svg>
<div class="t" style="left:109.6px;top:663.7px;color:#dadada;font-size:8.3px;letter-spacing:-0.601px;clip-path:inset(0 0 2.1px 0);">Env Fog</div>
<div class="a" style="left:41.6px;top:680px;width:28.4px;height:12.7px;background:#414141"></div>
<div class="a" style="left:70px;top:680px;width:147.5px;height:12.7px;background:#424242"></div>
<div class="a" style="left:40.8px;top:679.6px;width:1px;height:13.1px;background:#3b3b3b"></div>
<div class="a" style="left:69.4px;top:679.6px;width:1px;height:13.1px;background:#3b3b3b"></div>
<div class="a" style="left:69.4px;top:679.4px;width:148px;height:1px;background:#3b3b3b"></div>
<div class="t" style="left:10.5px;top:681px;color:#ececec;font-size:8.3px;letter-spacing:-0.485px;">Create</div>
<div class="t" style="left:48.4px;top:681px;color:#909090;font-size:8.3px;letter-spacing:-0.512px;">Bins</div>
<div class="sep" style="left:230.2px;top:306.7px;height:12.8px"></div>
<svg style="left:238px;top:307.800px" width="12" height="10" viewBox="0 0 12 10"><path d="M1.300 0.900h9.400v8.800h-9.400z" fill="none" stroke="#bcbcbc" stroke-width="0.850"/><path d="M0.100 3L3.900 5.400 0.100 7.800z" fill="#f2f2f2"/></svg>
<svg style="left:255px;top:307.800px" width="13" height="10" viewBox="0 0 13 10"><path d="M1.500 1.100h9.400v8.400h-9.400z" fill="none" stroke="#e6e6e6" stroke-width="1.300"/><path d="M0.200 3L4.400 5.400 0.200 7.800z" fill="#f6f6f6"/><path d="M8.500 3L12.700 5.400 8.500 7.800z" fill="#f6f6f6"/></svg>
<svg style="left:273.600px;top:307.800px" width="12" height="10" viewBox="0 0 12 10"><path d="M0.800 0.900h9.400v8.800h-9.400z" fill="none" stroke="#bcbcbc" stroke-width="0.850"/><path d="M7.900 3L11.700 5.400 7.900 7.800z" fill="#f2f2f2"/></svg>
<div class="sep" style="left:290.8px;top:306.7px;height:12.8px"></div>
<svg style="left:299px;top:308.300px" width="10" height="9.800" viewBox="0 0 10 9.800"><path d="M0.500 3.400v-2.900h3M6.400 0.500h3.100v2.900M9.500 6.400v2.900h-3.100M3.500 9.300h-3v-2.900" fill="none" stroke="#a8a8a8" stroke-width="0.900"/><path d="M3.700 1.800L4.500 3.600 6.300 4.400 4.500 5.200 3.700 7 2.900 5.200 1.100 4.400 2.900 3.600z" fill="#27a8a0"/><path d="M6.900 5.600L7.400 6.700 8.500 7.200 7.400 7.700 6.900 8.800 6.400 7.700 5.300 7.200 6.400 6.700z" fill="#27a8a0"/></svg>
<svg style="left:315.500px;top:307.600px" width="12" height="12" viewBox="0 0 12 12"><path d="M1 0.900h4.500" stroke="#357f7c" stroke-width="0.700" stroke-dasharray="1.600 0.800"/><path d="M9.300 0.300v4.800M6.800 2.700h5" stroke="#27a8a0" stroke-width="1.200" fill="none"/><rect x="2.500" y="5.100" width="5" height="1.900" fill="#b4b4b4"/><rect x="5.800" y="7.400" width="5" height="2" fill="#d6d6d6"/><path d="M1.500 11h8" stroke="#357f7c" stroke-width="0.700" stroke-dasharray="1.600 0.800"/></svg>
<svg style="left:333.500px;top:307.600px" width="13" height="12" viewBox="0 0 13 12"><path d="M1 0.900h4.500" stroke="#357f7c" stroke-width="0.700" stroke-dasharray="1.600 0.800"/><path d="M6.400 2.900h6" stroke="#27a8a0" stroke-width="1.200" fill="none"/><rect x="2.500" y="5.100" width="5" height="1.900" fill="#b4b4b4"/><rect x="5.800" y="7.400" width="5" height="2" fill="#d6d6d6"/><path d="M1.500 11h8" stroke="#357f7c" stroke-width="0.700" stroke-dasharray="1.600 0.800"/></svg>
<svg style="left:352.600px;top:309.800px" width="11" height="8" viewBox="0 0 11 8"><path d="M0.700 0.300v7.400M10 0.300v7.400" stroke="#27a8a0" stroke-width="1.100" stroke-dasharray="1.500 1.300" fill="none"/><path d="M2.400 3.800h4" stroke="#27a8a0" stroke-width="1.100"/><path d="M5.600 1.700L8.600 3.800 5.600 5.900z" fill="#27a8a0"/></svg>
<svg style="left:369.600px;top:307.800px" width="12" height="12" viewBox="0 0 12 12"><circle cx="3.200" cy="5.700" r="2.900" fill="#27a8a0"/><path d="M4.600 3.600L5.800 1.400M4.600 7.800L5.800 10" stroke="#9a9a9a" stroke-width="0.800" fill="none"/><path d="M5.400 1.200h6M5.400 10h6" stroke="#e0e0e0" stroke-width="1.700" fill="none"/></svg>
<div class="sep" style="left:387.6px;top:306.7px;height:12.8px"></div>
<svg style="left:394.6px;top:308px" width="11.6" height="10.4" viewBox="0 0 11.6 10.4"><rect x="0.3" y="0.4" width="11" height="2.6" fill="#d4d4d4"/><rect x="0.6" y="4.2" width="10.4" height="2" fill="none" stroke="#c6c6c6" stroke-width="0.8"/><rect x="0.6" y="7.7" width="10.4" height="2" fill="none" stroke="#c6c6c6" stroke-width="0.8"/></svg>
<svg style="left:412.6px;top:308px" width="11.6" height="10.4" viewBox="0 0 11.6 10.4"><rect x="0.3" y="0.4" width="11" height="2.6" fill="#d4d4d4"/><rect x="0.3" y="3.9" width="11" height="2.6" fill="#bdbdbd"/><rect x="0.6" y="7.7" width="10.4" height="2" fill="none" stroke="#c6c6c6" stroke-width="0.8"/></svg>
<svg style="left:430.9px;top:308px" width="11.6" height="10.4" viewBox="0 0 11.6 10.4"><rect x="0.3" y="0.4" width="11" height="2.6" fill="#d4d4d4"/><rect x="0.3" y="3.9" width="11" height="2.6" fill="#c6c6c6"/><rect x="0.3" y="7.4" width="11" height="2.6" fill="#c6c6c6"/></svg>
<svg style="left:448.8px;top:308px" width="11.6" height="10.4" viewBox="0 0 11.6 10.4"><rect x="0.3" y="0.4" width="11" height="2.6" fill="#858585"/><rect x="0.6" y="4.2" width="10.4" height="2" fill="none" stroke="#c6c6c6" stroke-width="0.8"/><rect x="0.6" y="7.7" width="10.4" height="2" fill="none" stroke="#c6c6c6" stroke-width="0.8"/></svg>
<svg style="left:467.6px;top:308.2px" width="10" height="11" viewBox="0 0 10 11"><circle cx="3.8" cy="3.9" r="2.8" fill="none" stroke="#e6e6e6" stroke-width="1.3"/><path d="M5.9 6.2L9 9.8" stroke="#e6e6e6" stroke-width="1.6"/></svg>
<svg style="left:485.4px;top:308.5px" width="10.2" height="10.2" viewBox="0 0 10 10"><rect x="0.6" y="0.6" width="8.8" height="8.8" fill="#2f4f52" stroke="#2f9295" stroke-width="1"/><circle cx="5.8" cy="4.4" r="2.2" fill="none" stroke="#86babc" stroke-width="0.9"/><path d="M4.2 6L2 8.2" stroke="#86babc" stroke-width="1.1"/></svg>
<div class="sep" style="left:502.3px;top:306.7px;height:12.8px"></div>
<svg style="left:509.8px;top:308px" width="11" height="11" viewBox="0 0 11 11"><path d="M3.4 0.4v10.2M7.4 0.4v10.2M0.4 3.6h10.2M0.4 7.4h10.2" stroke="#2b9a78" stroke-width="0.95" fill="none"/></svg>
<svg style="left:527.6px;top:307.8px" width="12" height="12" viewBox="0 0 12 12"><path d="M6.4 5.2L3.6 7.8A2.6 2.6 0 0 1 0.9 3.2L3 1.2a2.6 2.6 0 0 1 3.9 0.2" fill="none" stroke="#e4e4e4" stroke-width="1.6"/><path d="M7.4 5v6.4M10 5v6.4M5.4 7.2h6.4M5.4 9.8h6.4" stroke="#27a8a0" stroke-width="1" fill="none"/></svg>
<svg style="left:545.2px;top:308.2px" width="12" height="11" viewBox="0 0 12 11"><path d="M1.2 9.6V4.2L4 1.2h4.4" fill="none" stroke="#5e6666" stroke-width="1.4"/><rect x="1" y="7.2" width="6" height="2.8" fill="#5a6262"/><circle cx="8.6" cy="7" r="2.2" fill="none" stroke="#646c6c" stroke-width="1.2"/></svg>
<div class="sep" style="left:562.8px;top:306.7px;height:12.8px"></div>
<svg style="left:570.6px;top:308.8px" width="10.4" height="10.4" viewBox="0 0 10.4 10.4"><path d="M2.2 0.8h6.4M2.2 9.6h6.4" stroke="#dcdcdc" stroke-width="1"/><path d="M0.2 0.4L3.2 2.6 0.2 4.4zM0.2 6L3.2 7.8 0.2 10z" fill="#e8e8e8"/><path d="M7.6 2v6.4" stroke="#cfcfcf" stroke-width="0.9"/><path d="M5.4 3.2L8.4 5.2 5.4 7.2z" fill="#27a8a0"/></svg>
<div class="a" style="left:586px;top:309px;width:117.2px;height:11.2px;background:#2b2b2b"></div>
<div class="t" style="left:588px;top:310.9px;color:#8d8d8d;font-size:7.3px">Search...</div>
<div class="tri" style="left:694px;top:313.2px;border-top-color:#e0e0e0;border-left-width:3.2px;border-right-width:3.2px;border-top-width:3.4px"></div>
<div class="a" style="left:230.2px;top:328.3px;width:739.600px;height:13.100px;background:#383838"></div>
<div class="t" style="left:236.6px;top:330.6px;color:#dcdcdc">Untitled_1</div>
<div class="a" style="left:230.2px;top:341.3px;width:738.8px;height:341.7px;background:#2f2f2f;border:1.2px solid #64869b"></div>
<div class="t" style="left:555.3px;top:502px;color:#8c8c8c;font-size:8.3px;letter-spacing:-0.416px;">Press Tab to create a node</div>
<div class="a" style="left:261.7px;top:327.8px;width:107.8px;height:11.9px;background:#ffffe1;border-radius:1.2px;box-shadow:0 0 0 0.7px rgba(10,10,10,0.9),0.8px 0.9px 0.5px 0.4px rgba(0,0,0,0.7)"></div>
<div class="t" style="left:263.5px;top:328.9px;color:#000;font-size:7.9px;letter-spacing:0.087px;">Input and output connections</div>
<div class="a" style="left:0;top:692.7px;width:1280px;height:27.3px;background:#191919"></div>
<div class="a" style="left:294.2px;top:692.7px;width:32.2px;height:27.3px;background:#3d3d3d"></div>
<div class="a" style="left:100.55px;top:718.6px;width:26.5px;height:1.4px;background:#7db9e8"></div>
<div class="a" style="left:198.55px;top:718.6px;width:26.5px;height:1.4px;background:#7db9e8"></div>
<div class="a" style="left:231.05px;top:718.6px;width:26.5px;height:1.4px;background:#7db9e8"></div>
<div class="a" style="left:263.75px;top:718.6px;width:26.5px;height:1.4px;background:#7db9e8"></div>
<div class="a" style="left:329.45px;top:718.6px;width:26.5px;height:1.4px;background:#7db9e8"></div>
<div class="a" style="left:361.55px;top:718.6px;width:26.5px;height:1.4px;background:#7db9e8"></div>
<div class="a" style="left:394.35px;top:718.6px;width:26.5px;height:1.4px;background:#7db9e8"></div>
<div class="a" style="left:294.2px;top:718.6px;width:32.2px;height:1.4px;background:#7db9e8"></div>
<svg style="left:10.3px;top:701.2px" width="11.2" height="11.2" viewBox="0 0 11.2 11.2"><path d="M0 1.6L4.8 0.9V5.3H0zM5.5 0.8L11.2 0V5.3H5.5zM0 5.9H4.8V10.3L0 9.6zM5.5 5.9H11.2V11.2L5.5 10.4z" fill="#fff"/></svg>
<svg style="left:42px;top:700.4px" width="12" height="12" viewBox="0 0 12 12"><circle cx="7.4" cy="4.4" r="3.6" fill="none" stroke="#f2f2f2" stroke-width="1.1"/><path d="M4.8 7L0.6 11.4" stroke="#f2f2f2" stroke-width="1.2"/></svg>
<svg style="left:73.8px;top:701px" width="12" height="11" viewBox="0 0 12 11"><path d="M1 0.6h6.6M1 10.4h6.6" stroke="#f2f2f2" stroke-width="1"/><rect x="1.4" y="2.8" width="6" height="5.2" fill="none" stroke="#f2f2f2" stroke-width="1"/><path d="M10.4 0.2v1.8M10.4 3.6v3.8M10.4 9v1.8" stroke="#f2f2f2" stroke-width="1.3"/></svg>
<svg style="left:106.4px;top:700px" width="15" height="13" viewBox="0 0 15 13"><path d="M0.3 0.6h5.2l1.2 1.4h8v2H0.3z" fill="#e9a825"/><rect x="0.3" y="2.6" width="14.4" height="8.6" fill="#f7d067"/><rect x="3.2" y="6.4" width="8.6" height="4.8" fill="#3f8fd6"/><rect x="5.6" y="8.8" width="3.8" height="2.8" fill="#f7d067"/><rect x="0.3" y="10.6" width="3" height="1" fill="#e9a825"/><rect x="11.8" y="10.6" width="3" height="1" fill="#e9a825"/></svg>
<svg style="left:138.2px;top:698.6px" width="16.4" height="16.4" viewBox="0 0 16 16"><circle cx="8" cy="8" r="7.8" fill="#2b7fe0"/><circle cx="8" cy="8" r="5.200" fill="none" stroke="#e4eefc" stroke-width="2"/><path d="M8 2.4L11 7M13.4 6.4L9 10.6M11.2 12.4L5.6 11M3 10L6.4 5.2" stroke="#d6e6fb" stroke-width="1.1" fill="none"/><circle cx="8" cy="8" r="3.100" fill="#1f2c48"/></svg>
<svg style="left:171px;top:698.6px" width="16.4" height="16.4" viewBox="0 0 16 16"><rect width="16" height="16" fill="#8fc05e"/><rect y="0" width="16" height="6" fill="#a6d078"/><path d="M8 1c4.200 0 7 2.200 7 5 0 2.400-2.200 3.800-4.800 4L11 15H5l0.800-5C3.200 9.800 1 8.400 1 6 1 3.200 3.800 1 8 1z" fill="#eef6e2"/></svg>
<svg style="left:204.6px;top:698.8px" width="18" height="18" viewBox="0 0 18 18"><circle cx="8" cy="8" r="7.6" fill="#db4437"/><path d="M8 8L1.400 4.200A7.600 7.600 0 0 0 8 15.600z" fill="#0f9d58"/><path d="M8 8L8 15.600A7.600 7.600 0 0 0 14.600 4.200z" fill="#f4c20d"/><path d="M8 8L14.600 4.200A7.600 7.600 0 0 0 1.400 4.200z" fill="#db4437"/><circle cx="8" cy="8" r="3.5" fill="#f1f1f1"/><circle cx="8" cy="8" r="2.7" fill="#4285f4"/><circle cx="12.200" cy="12.400" r="4.600" fill="#3a96e8"/><text x="12.2" y="14.700" font-size="6" font-family="Liberation Sans,sans-serif" fill="#fff" text-anchor="middle">A</text></svg>
<svg style="left:237px;top:699.5px" width="15" height="14.800" viewBox="0 0 15 14.800"><rect width="15" height="14.800" fill="#2f8fe6"/><rect width="15" height="6" fill="#3ea0f4"/><path d="M0 14.800V10.200L5.200 4.600 10 10l1.800-1.800L15 11.400v3.400z" fill="#1c4fa8"/><circle cx="11.600" cy="3.400" r="1.300" fill="#fff"/></svg>
<svg style="left:269.600px;top:698.800px" width="18" height="18" viewBox="0 0 18 18"><circle cx="8" cy="8" r="7.800" fill="#2a9ede"/><path d="M2.800 8L12.600 4.200 11 12.200 7.800 9.800 6.600 11.600 6.200 9z" fill="#fff"/><circle cx="12.200" cy="12.400" r="4.800" fill="#e8312f"/><text x="12.200" y="14.700" font-size="6.200" font-family="Liberation Sans,sans-serif" fill="#fff" text-anchor="middle" font-weight="bold">1</text></svg>
<svg style="left:301.700px;top:698.700px" width="17" height="15.800" viewBox="0 0 17 15.800"><rect width="17" height="15.800" fill="#dff2f1"/><path d="M2.200 2h3l3.300 6.200L11.800 2h3v9.600h-2.600V6.200L8.500 12.400 4.800 6.200v5.400H2.200z" fill="#1e9aa0"/><rect x="9.400" y="12.600" width="5.400" height="1.800" fill="#40b8b4"/></svg>
<svg style="left:334px;top:698.600px" width="17" height="17" viewBox="0 0 17 17"><circle cx="8.500" cy="8.500" r="8.300" fill="#76b83f"/><path d="M4.400 4.200v5a3.400 3.400 0 0 0 6.800 0v-5M4.400 9v5" fill="none" stroke="#fff" stroke-width="2.100"/><path d="M11.200 8.400c0 2 0.600 2.800 2 2.600" fill="none" stroke="#fff" stroke-width="1.800"/></svg>
<svg style="left:369px;top:702px" width="12.600" height="9" viewBox="0 0 12.600 9"><rect x="4.400" width="8.200" height="9" fill="#76b900"/><path d="M0.400 4.600C2 2.200 4.400 1.400 6.400 1.800v1.200C5 2.800 3.600 3.400 2.600 4.600c1 1.200 2.200 1.800 3.800 1.600v1.200C4 7.600 1.800 6.600 0.400 4.600z" fill="#76b900"/><path d="M6.400 1v7M6.400 3.200c1.400 0 2.400 0.800 3 1.600-0.800 0.800-1.800 1.200-3 1.200" stroke="#161616" stroke-width="0.900" fill="none"/></svg>
<svg style="left:399.700px;top:698.600px" width="16.600" height="16.600" viewBox="0 0 16.600 16.600"><rect width="16.600" height="16.600" fill="#f26a1e"/><path d="M0 16.600V9.500A8 8 0 0 1 8 1.500 6.500 6.500 0 0 1 14.500 8 5 5 0 0 1 9.500 13 3.600 3.600 0 0 1 6 9.500 2.500 2.500 0 0 1 8.500 7 1.600 1.600 0 0 1 10 8.600 H8.600 A0.600 0.600 0 0 0 8 9.500 1.800 1.800 0 0 0 9.800 11 3 3 0 0 0 12.500 8 4.500 4.500 0 0 0 8 3.600 5.800 5.800 0 0 0 2.200 9.500 7 7 0 0 0 5 16.600z" fill="#1c1410"/></svg>
<svg style="left:1116.400px;top:704.400px" width="9" height="5" viewBox="0 0 9 5"><path d="M0.400 4.600L4.400 0.600 8.400 4.600" fill="none" stroke="#f0f0f0" stroke-width="0.900"/></svg>
<svg style="left:1131.200px;top:702.600px" width="11.400" height="7.800" viewBox="0 0 11.400 7.800"><path d="M2.600 7.600A2.400 2.400 0 0 1 2.400 2.900 3.300 3.300 0 0 1 8.600 2.600 2.600 2.600 0 0 1 8.800 7.600z" fill="#e6e6e6"/></svg>
<svg style="left:1147.200px;top:701.800px" width="11" height="10" viewBox="0 0 11 10"><rect x="2.600" y="1.200" width="8" height="5.800" fill="none" stroke="#e6e6e6" stroke-width="0.900"/><rect x="0.400" y="0.300" width="2.400" height="2.400" fill="#161616" stroke="#e6e6e6" stroke-width="0.700"/><rect x="2.400" y="6.400" width="4.400" height="3.200" fill="#161616" stroke="#e6e6e6" stroke-width="0.700"/></svg>
<svg style="left:1163px;top:702.200px" width="11" height="9" viewBox="0 0 11 9"><path d="M0.500 3h1.600L4.400 0.800v7.400L2.100 6H0.500z" fill="none" stroke="#e6e6e6" stroke-width="0.800"/><path d="M6.600 2.800l3.400 3.400M10 2.800L6.600 6.200" stroke="#e6e6e6" stroke-width="0.800"/></svg>
<div class="t" style="left:1180.4px;top:701.6px;color:#f4f4f4;font-size:8.3px;letter-spacing:-0.729px;">ENG</div>
<div class="t" style="left:1213.2px;top:695.6px;color:#f4f4f4;font-size:8.3px;letter-spacing:-0.474px;">21:07</div>
<div class="t" style="left:1205.2px;top:707.8px;color:#f4f4f4;font-size:8.3px;letter-spacing:-0.574px;">15.04.2020</div>
<svg style="left:1252.800px;top:701.400px" width="14.500" height="14" viewBox="0 0 14.500 14"><path d="M0.300 0.300h10v6.800H3.400L1.800 9V7.100H0.300z" fill="#f4f4f4"/><path d="M1.800 2h7M1.800 3.600h7M1.800 5.200h7" stroke="#161616" stroke-width="0.500"/><circle cx="10.200" cy="9.600" r="3.900" fill="#161616" stroke="#d0d0d0" stroke-width="0.700"/><text x="10.200" y="11.800" font-size="6" font-family="Liberation Sans,sans-serif" fill="#fff" text-anchor="middle">4</text></svg>
</div>
</body>
</html>
